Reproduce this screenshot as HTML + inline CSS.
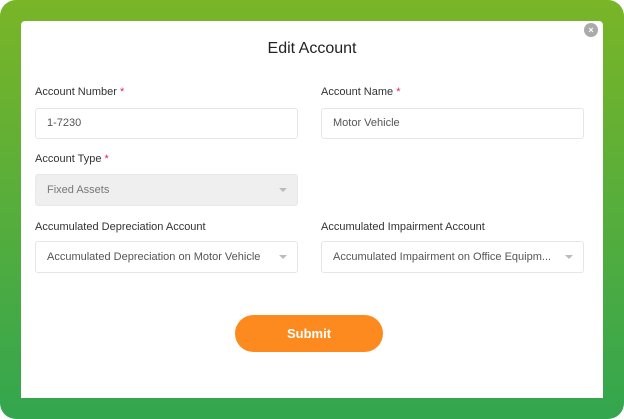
<!DOCTYPE html><html><head><style>
body{margin:0;width:624px;height:419px;background:#fff;font-family:"Liberation Sans",sans-serif;overflow:hidden}
.bg{position:absolute;left:0;top:0;width:624px;height:419px;border-radius:16px;background:linear-gradient(#7ab527,#33a64f)}
.m{position:absolute;left:21px;top:21px;width:582px;height:377px;background:#fff;border-radius:4px 4px 0 0}
.t{position:absolute;left:0;width:582px;top:19px;text-align:center;font-size:16px;color:#222}
.l{position:absolute;font-size:11px;color:#333}
.l b{color:#e0245e;font-weight:normal}
.i{position:absolute;width:261px;height:30px;border:1px solid #e6e6e6;border-radius:3px;box-sizing:border-box;font-size:11px;color:#555;line-height:28px;padding-left:11px;white-space:nowrap}
.i.s:after{content:"";position:absolute;right:10px;top:13px;border:4px solid transparent;border-top:4px solid #bbb}
.x{position:absolute;left:563px;top:2px;width:14px;height:14px;border-radius:50%;background:#aaa;color:#fff;font-size:9px;text-align:center;line-height:14px;font-weight:bold}
.btn{position:absolute;left:214px;top:294px;width:148px;height:37px;border-radius:19px;background:#fc8a1e;color:#fff;font-weight:bold;font-size:13px;text-align:center;line-height:37px}
</style></head><body><div class="bg"></div>
<div class="m">
<div class="x">×</div>
<div class="t">Edit Account</div>
<div class="l" style="left:14px;top:65px">Account Number <b>*</b></div>
<div class="l" style="left:300px;top:65px">Account Name <b>*</b></div>
<div class="i" style="left:14px;top:87px;width:263px;height:31px">1-7230</div>
<div class="i" style="left:300px;top:87px;width:263px;height:31px">Motor Vehicle</div>
<div class="l" style="left:14px;top:132px">Account Type <b>*</b></div>
<div class="i s" style="left:14px;top:153px;width:263px;background:#efefef;color:#777;border-color:#e8e8e8;height:32px;line-height:30px">Fixed Assets</div>
<div class="l" style="left:14px;top:200px">Accumulated Depreciation Account</div>
<div class="l" style="left:300px;top:200px">Accumulated Impairment Account</div>
<div class="i s" style="left:14px;top:220px;width:263px;height:32px;line-height:30px">Accumulated Depreciation on Motor Vehicle</div>
<div class="i s" style="left:300px;top:220px;width:263px;height:32px;line-height:30px">Accumulated Impairment on Office Equipm...</div>
<div class="btn">Submit</div>
</div></body></html>
